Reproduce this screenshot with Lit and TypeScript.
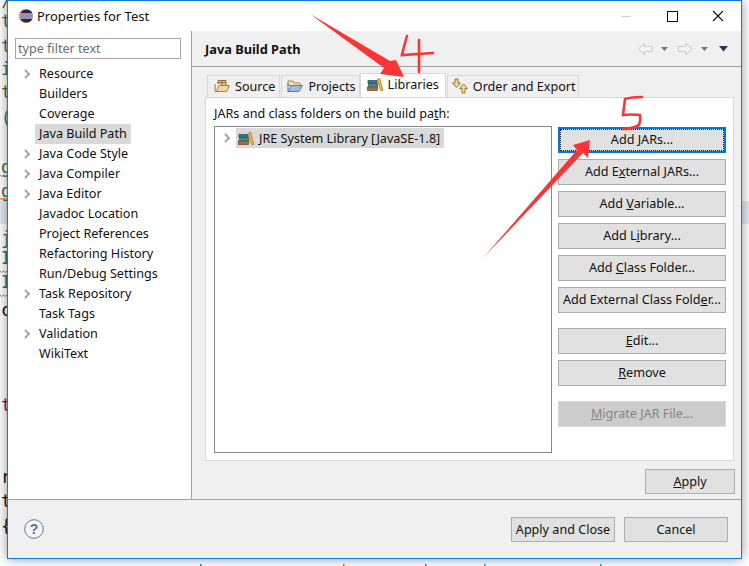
import { LitElement, html, css, svg } from "lit";
import { customElement } from "lit/decorators.js";

const booksIcon = svg`<svg class="ico" viewBox="0 0 16 16" width="16" height="16">
  <rect x="0.5" y="11" width="10" height="3.5" fill="#b5653a" stroke="#7a4526" stroke-width=".7"/>
  <rect x="1.5" y="7.5" width="9" height="3.3" fill="#3f8f7d" stroke="#2c5f5a" stroke-width=".7"/>
  <rect x="1" y="4.5" width="9" height="3" fill="#3e6d8f" stroke="#2f4c68" stroke-width=".7"/>
  <path d="M10 3.5 L12.5 2 L16 14.5 L13.5 14.5 Z" fill="#eeb04a" stroke="#b57a22" stroke-width=".7"/>
</svg>`;
const sourceIcon = svg`<svg class="ico" viewBox="0 0 16 16" width="16" height="16">
  <path d="M4 6 V2.5 H12 V7" fill="#e8c98c" stroke="#8f6a3a" stroke-width="1"/>
  <path d="M8 2.5 V7 M4 4.7 H12" stroke="#8f6a3a" stroke-width="1" fill="none"/>
  <path d="M1 6 V13.5 H12.5 L15.5 7.5 H5 L2.5 13" fill="#f6d99a" stroke="#a9803c" stroke-width="1"/>
</svg>`;
const projectsIcon = svg`<svg class="ico" viewBox="0 0 16 16" width="16" height="16">
  <path d="M1 3 H6 L7.5 5 H13 V7.5 H1 Z" fill="#f3dca6" stroke="#a98a4c" stroke-width="1"/>
  <path d="M1 13.5 V5 M1 13.5 H12 L15.5 7.5 H4.5 Z" fill="#9dbce6" stroke="#5476a8" stroke-width="1"/>
</svg>`;
const orderIcon = svg`<svg class="ico" viewBox="0 0 16 16" width="16" height="16">
  <path d="M3 1 H6 V5 H8.5 L4.5 9.5 L.5 5 H3 Z" fill="#f6dc8c" stroke="#927a34" stroke-width="1"/>
  <path d="M10 15 H13 V10.5 H15.5 L11.5 6 L7.5 10.5 H10 Z" fill="#f6dc8c" stroke="#927a34" stroke-width="1"/>
</svg>`;
const eclipseIcon = svg`<svg class="ico" viewBox="0 0 16 16" width="16" height="16">
  <circle cx="7.6" cy="8" r="7" fill="#f5a030"/>
  <circle cx="8.5" cy="8" r="6.6" fill="#2c2255"/>
  <path d="M2 6 H15 M1.6 8 H15.4 M2 10 H15" stroke="#fff" stroke-width="1"/>
</svg>`;
const chevron = svg`<svg class="chev" viewBox="0 0 6 10" width="6" height="10"><path d="M1 1 L5 5 L1 9" fill="none" stroke="#a6a6a6" stroke-width="2"/></svg>`;

const tree: [string, boolean][] = [
  ["Resource", true], ["Builders", false], ["Coverage", false], ["Java Build Path", false],
  ["Java Code Style", true], ["Java Compiler", true], ["Java Editor", true], ["Javadoc Location", false],
  ["Project References", false], ["Refactoring History", false], ["Run/Debug Settings", false],
  ["Task Repository", true], ["Task Tags", false], ["Validation", true], ["WikiText", false],
];

const peek: [number, string, string][] = [
  [21, "t", "#2f7455"], [46, "t", "#2f7455"], [69, "i", "#2f7455"], [92, "t", "#2f7455"],
  [118, "(", "#2f7455"], [167, "g", "#2f7455"], [191, "g", "#2f7455"], [238, "j", "#2f7455"], [258, "I", "#2f7455"],
  [282, "I", "#2f7455"], [310, "c", "#111"], [405, "t", "#7f0055"], [477, "r", "#111"], [501, "t", "#111"], [526, "{", "#111"],
];
const squiggles = [175, 198, 271, 295];
const tips: [number, string][] = [[200, "#3f7f5f"], [343, "#b8741a"], [425, "#3f7f5f"], [484, "#5d7f8f"], [600, "#3f8f8f"]];

@customElement("app-root")
export class AppRoot extends LitElement {
  static styles = css`
    :host { display: block; font-family: "Noto Sans", "Noto Sans CJK SC", sans-serif; }
    .desk { position: relative; width: 749px; height: 566px; overflow: hidden; background: #fff; }
    .band { position: absolute; left: 0; right: 0; top: 201px; height: 23px; background: #e3e9f4; }
    .peek { position: absolute; left: 1px; font: 17px "DejaVu Sans Mono", monospace; line-height: 20px; }
    .window { position: absolute; left: 7px; top: 0; width: 735px; height: 559px; box-sizing: border-box;
      border: 1px solid #0a7bd8; background: #fff; display: flex; flex-direction: column;
      box-shadow: 0 0 11px rgba(0,0,0,.42); color: #111; font-size: 12.6px; }
    .title { height: 30px; flex: none; display: flex; align-items: center; padding-left: 10px; }
    .title span { flex: 1; margin-left: 3px; padding-bottom: 1px; font-size: 13px; }
    .wc { width: 46px; height: 30px; flex: none; display: flex; align-items: center; justify-content: center; }
    .main { height: 469px; flex: none; display: flex; border-bottom: 1px solid #a0a0a0; box-sizing: border-box; }
    .side { width: 184px; flex: none; box-sizing: border-box; border-right: 1px solid #a0a0a0; padding: 7px 0 0 7px; }
    .filter { width: 166px; height: 21px; box-sizing: border-box; border: 1px solid #a6a6a6; padding: 0 2px;
      color: #6d6d6d; line-height: 19px; margin-bottom: 5px; }
    .row { height: 20px; display: flex; align-items: center; }
    .slot { width: 20px; flex: none; display: flex; justify-content: flex-start; padding-left: 9px; box-sizing: border-box; }
    .rowtext { padding: 0 4px; line-height: 20px; height: 20px; }
    .sel { background: #d9d9d9; }
    .right { flex: 1; background: #f0f0f0; display: flex; flex-direction: column; min-width: 0; }
    .head { flex: none; box-sizing: border-box; border-bottom: 1px solid #a0a0a0; height: 36px; display: flex; align-items: center; padding: 1px 13px 0; }
    .head b { flex: 1; font-size: 12.8px; font-weight: 700; }
    .nav { display: flex; align-items: center; }
    .tabs { display: flex; height: 30px; flex: none; align-items: flex-end; margin: 0 7px 0 15px; }
    .tab { height: 22px; box-sizing: border-box; display: flex; align-items: center; padding: 0 4px 1px 6px; gap: 5px;
      border: 1px solid #d9d9d9; border-bottom: 0; white-space: nowrap; }
    .tab.source { margin-right: 1px; }
    .tab.projects { padding: 0 3px 1px 5px; }
    .tab.on { height: 24px; background: #fff; padding: 0 6px 3px 6px; }
    .tab.order { margin-left: 1px; padding: 0 2px 1px 4px; }
    .panel { margin: 0 7px 0 13px; height: 364px; flex: none; box-sizing: border-box; background: #fff;
      border: 1px solid #d9d9d9; padding: 6px 7px 7px 8px; display: flex; flex-direction: column; }
    .label { height: 22px; flex: none; line-height: 19px; }
    .cols { flex: 1; display: flex; gap: 6px; min-height: 0; }
    .treebox { width: 338px; flex: none; box-sizing: border-box; border: 1px solid #828790; padding: 1px 0 0 0; }
    .treerow { display: flex; align-items: center; height: 20px; }
    .treerow .slot { width: 21px; }
    .treesel { background: #d9d9d9; display: flex; align-items: center; gap: 5px; padding: 0 4px 0 2px; height: 20px; }
    .btns { width: 168px; flex: none; display: flex; flex-direction: column; padding-top: 1px; }
    button { font: inherit; color: #111; background: #e1e1e1; border: 1px solid #adadad; padding: 0; margin: 0; height: 26px; line-height: 20px; }
    .btns button { margin-bottom: 6px; flex: none; }
    .btns button.gapped { margin-top: 9px; }
    button.focus { border: 2px solid #0078d7; position: relative; }
    button.focus::after { content: ""; position: absolute; inset: 0; border: 1px dotted #111; }
    button:disabled { background: #cccccc; border-color: #d9d9d9; color: #838383; }
    .applyrow { flex: 1; display: flex; justify-content: flex-end; align-items: flex-start; padding: 8px 6px 0 0; }
    .applyrow button { width: 90px; height: 25px; }
    .foot { flex: 1; background: #f0f0f0; display: flex; align-items: center; padding: 0 13px 0 16px; gap: 9px; }
    .foot .help { margin-right: auto; display: block; }
    .foot button { width: 104px; height: 25px; padding-top: 2px; }
    .ink { position: absolute; left: 0; top: 0; pointer-events: none; }
    .ico, .chev { display: block; flex: none; }
  `;

  render() {
    return html`<div class="desk">
      <div class="band"></div>
      ${peek.map(([y, c, col]) => html`<div class="peek" style="top:${y - 10}px;color:${col}">${c}</div>`)}
      <svg class="ink" width="7" height="566" viewBox="0 0 7 566">
        <path d="M3 8 L7 0" stroke="#2f7455" stroke-width="1.5" fill="none"/>
        ${squiggles.map((y) => svg`<path d="M0 ${y} l1.5 1.5 l2 -1.5 l2 1.5 l1.5 -1.5" stroke="#e2643a" fill="none" stroke-width="1"/>`)}
      </svg>
      <div class="window">
        <div class="title">
          ${eclipseIcon}<span>Properties for Test</span>
          <div class="wc"><svg width="10" height="10"><path d="M0 5.5 H10" stroke="#cfcfcf"/></svg></div>
          <div class="wc"><svg width="11" height="11"><rect x=".5" y=".5" width="10" height="10" fill="none" stroke="#111"/></svg></div>
          <div class="wc"><svg width="12" height="12"><path d="M1 1 L11 11 M11 1 L1 11" stroke="#111" stroke-width="1.1"/></svg></div>
        </div>
        <div class="main">
          <div class="side">
            <div class="filter">type filter text</div>
            ${tree.map(([t, ch]) => html`<div class="row"><div class="slot">${ch ? chevron : ""}</div><div class="rowtext ${t === "Java Build Path" ? "sel" : ""}">${t}</div></div>`)}
          </div>
          <div class="right">
            <div class="head"><b>Java Build Path</b>
              <div class="nav">
                <svg width="90" height="14" viewBox="0 0 90 14">
                  <path d="M.5 7 L6.5 1.5 V4.5 H14 V9.5 H6.5 V12.5 Z" fill="#f4f4f4" stroke="#c8c8c8"/>
                  <path d="M23 5 H30 L26.5 9 Z" fill="#777"/>
                  <path d="M54 7 L48 1.5 V4.5 H40.5 V9.5 H48 V12.5 Z" fill="#f4f4f4" stroke="#c8c8c8"/>
                  <path d="M63 5 H70 L66.5 9 Z" fill="#777"/>
                  <path d="M81 4 H90 L85.5 9.5 Z" fill="#3d2b63"/>
                </svg>
              </div>
            </div>
            <div class="tabs">
              <div class="tab source">${sourceIcon}<span>Source</span></div>
              <div class="tab projects">${projectsIcon}<span>Projects</span></div>
              <div class="tab on">${booksIcon}<span>Libraries</span></div>
              <div class="tab order">${orderIcon}<span>Order and Export</span></div>
            </div>
            <div class="panel">
              <div class="label">JARs and class folders on the build pa<u>t</u>h:</div>
              <div class="cols">
                <div class="treebox">
                  <div class="treerow"><div class="slot">${chevron}</div><div class="treesel">${booksIcon}<span>JRE System Library [JavaSE-1.8]</span></div></div>
                </div>
                <div class="btns">
                  <button class="focus">Add <u>J</u>ARs...</button>
                  <button>Add E<u>x</u>ternal JARs...</button>
                  <button>Add <u>V</u>ariable...</button>
                  <button>Add L<u>i</u>brary...</button>
                  <button>Add <u>C</u>lass Folder...</button>
                  <button>Add External Class Fold<u>e</u>r...</button>
                  <button class="gapped"><u>E</u>dit...</button>
                  <button><u>R</u>emove</button>
                  <button class="gapped" disabled><u>M</u>igrate JAR File...</button>
                </div>
              </div>
            </div>
            <div class="applyrow"><button><u>A</u>pply</button></div>
          </div>
        </div>
        <div class="foot">
          <svg class="help" width="20" height="20" viewBox="0 0 20 20"><circle cx="10" cy="10" r="9.3" fill="#f4f6f9" stroke="#64789c" stroke-width="1"/><text x="10" y="15" text-anchor="middle" font-size="14" font-weight="700" fill="#5b6f95" font-family="Liberation Sans, sans-serif">?</text></svg>
          <button>Apply and Close</button>
          <button>Cancel</button>
        </div>
      </div>
      <svg class="ink" width="749" height="566" viewBox="0 0 749 566">
        ${tips.map(([x, c]) => svg`<rect x=${x} y="564" width="1.5" height="2" fill=${c}/>`)}
        <polygon points="310,14 390,61 396,60 404,77 380,74 384,68" fill="#fb3535"/>
        <polygon points="483,258 577,150 573,145 590,140 588,158 583,153" fill="#fb3535"/>
        <path d="M407 36 Q404 46 402 55 Q418 54 433 53 M419 40 V72" fill="none" stroke="#fb3535" stroke-width="2.6" stroke-linecap="round"/>
        <path d="M642 97 Q632 97 625 99 L623 115 Q632 114 640 115 Q641 120 639 125 Q632 129 623 129" fill="none" stroke="#fb3535" stroke-width="2.6" stroke-linecap="round"/>
      </svg>
    </div>`;
  }
}
